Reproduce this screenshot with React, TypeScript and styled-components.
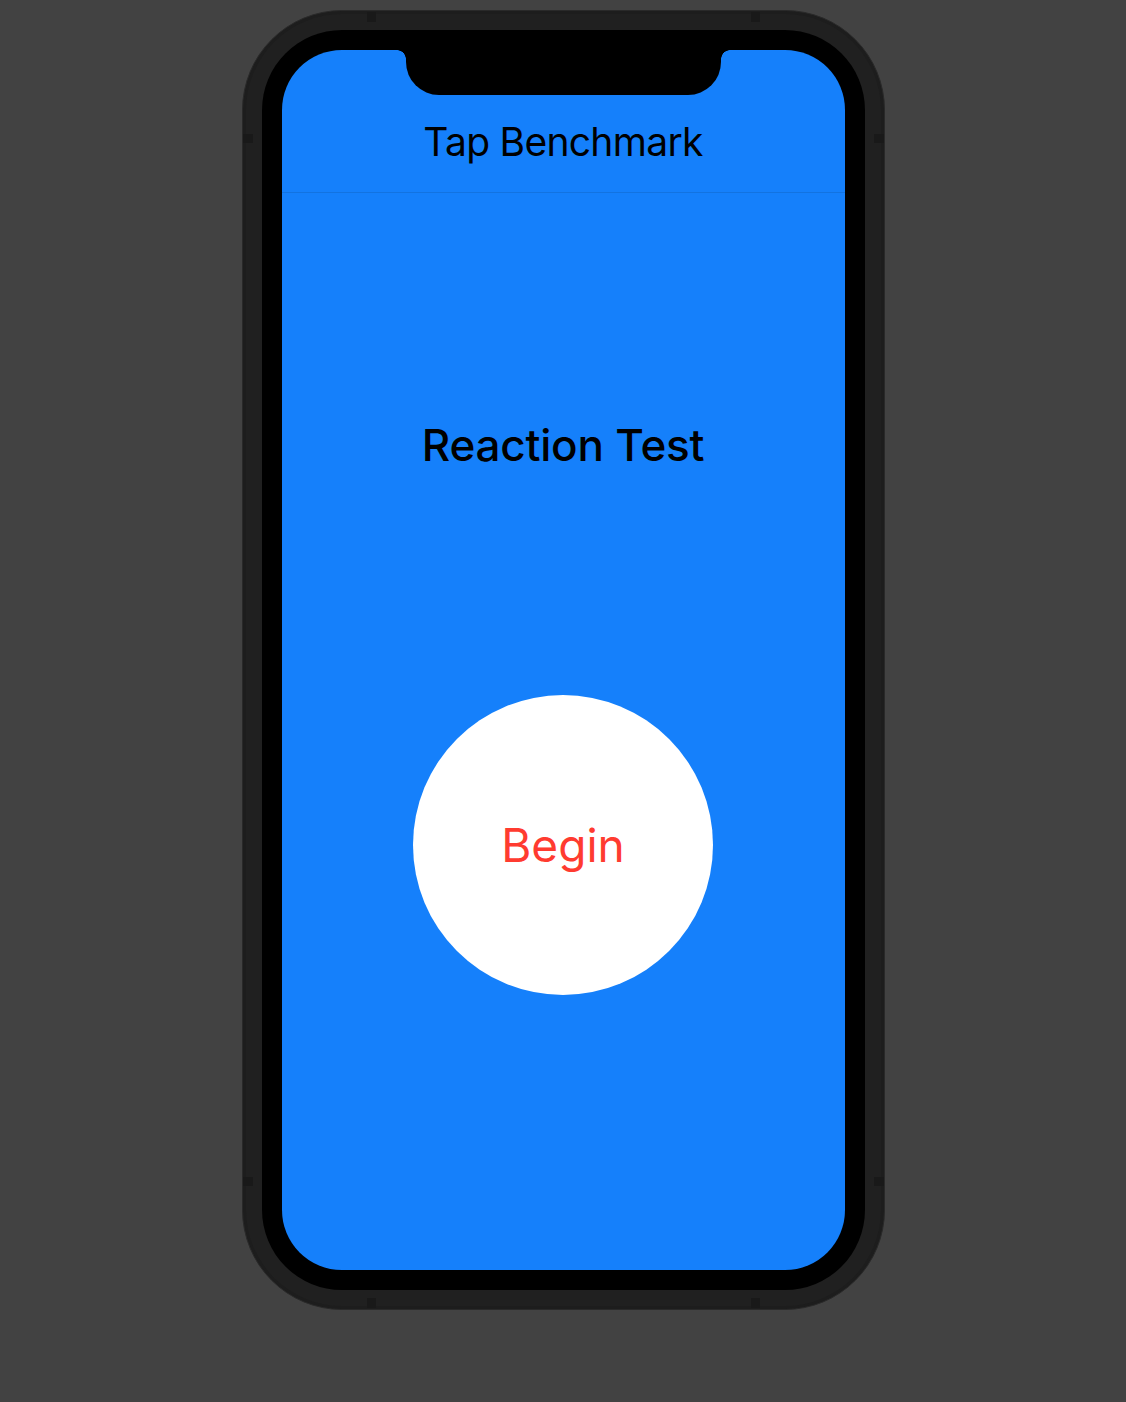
import styled, { createGlobalStyle } from 'styled-components'

const GlobalStyle = createGlobalStyle`
	html, body {
		margin: 0;
		padding: 0;
		background: #424242;
	}
	body {
		font-family: Inter, "Noto Sans", "Liberation Sans", sans-serif;
		-webkit-font-smoothing: antialiased;
	}
`

export default function App(): JSX.Element {
	return (
		<Page>
			<GlobalStyle />
			<Frame>
				{/* antenna lines on the metal band */}
				<Antenna $side="top" $offset={124} />
				<Antenna $side="top" $offset={124} $far />
				<Antenna $side="bottom" $offset={124} />
				<Antenna $side="bottom" $offset={124} $far />
				<Antenna $side="left" $offset={123} />
				<Antenna $side="left" $offset={123} $far />
				<Antenna $side="right" $offset={123} />
				<Antenna $side="right" $offset={123} $far />

				<Bezel>
					<Screen>
						<Notch />
						<Header>
							<HeaderTitle>Tap Benchmark</HeaderTitle>
						</Header>
						<Body>
							<Title>Reaction Test</Title>
							<TapButton type="button">Begin</TapButton>
						</Body>
					</Screen>
				</Bezel>
			</Frame>
		</Page>
	)
}

const Page = styled.div`
	min-height: 1402px;
	display: flex;
	justify-content: center;
	align-items: flex-start;
	padding-top: 10px;
	box-sizing: border-box;
`
const Frame = styled.div`
	position: relative;
	width: 643px;
	height: 1300px;
	box-sizing: border-box;
	padding: 19px;
	border-radius: 100px;
	background: #202020;
	border: 1.5px solid #292929;
	box-shadow: inset 0 0 0 3px #1d1d1d;
`
const Antenna = styled.span<{ $side: 'top' | 'bottom' | 'left' | 'right'; $offset: number; $far?: boolean }>`
	position: absolute;
	background: #191919;
	${({ $side, $offset, $far }) => {
		const along = $far ? 'right' : 'left'
		const alongV = $far ? 'bottom' : 'top'
		if ($side === 'top' || $side === 'bottom')
			return `${$side}: 1px; ${along}: ${$offset}px; width: 9px; height: 10px;`
		return `${$side}: 0px; ${alongV}: ${$offset}px; width: 10px; height: 9px;`
	}}
`
const Bezel = styled.div`
	height: 100%;
	box-sizing: border-box;
	padding: 20px;
	border-radius: 80px;
	background: #000;
`
const Screen = styled.div`
	position: relative;
	height: 100%;
	border-radius: 60px;
	overflow: hidden;
	background: #1580fb;
	display: flex;
	flex-direction: column;
`
const Notch = styled.div`
	position: absolute;
	top: 0;
	left: 50%;
	width: 315px;
	height: 45px;
	margin-left: -157.5px;
	background: #000;
	border-radius: 0 0 33px 33px;
	&::before, &::after {
		content: '';
		position: absolute;
		top: 0;
		width: 9px;
		height: 9px;
	}
	&::before {
		left: -9px;
		background: radial-gradient(circle at 0 100%, transparent 8.5px, #000 9px);
	}
	&::after {
		right: -9px;
		background: radial-gradient(circle at 100% 100%, transparent 8.5px, #000 9px);
	}
`
const Header = styled.header`
	height: 143px;
	box-sizing: border-box;
	padding-top: 72px;
	border-bottom: 1px solid rgba(0, 0, 0, 0.1);
	display: flex;
	justify-content: center;
	align-items: flex-start;
`
const HeaderTitle = styled.h1`
	margin: 0;
	font-size: 39px;
	line-height: 39px;
	font-weight: 400;
	color: #000;
	letter-spacing: -0.7px;
`
const Body = styled.main`
	flex: 1;
	display: flex;
	flex-direction: column;
	align-items: center;
`
const Title = styled.h2`
	margin: 230px 0 0;
	font-size: 44px;
	line-height: 44px;
	font-weight: 500;
	color: #000;
	letter-spacing: -0.2px;
`
const TapButton = styled.button`
	margin-top: 228px;
	width: 300px;
	height: 300px;
	border-radius: 50%;
	border: none;
	background: #fff;
	color: #ff3b30;
	font-family: inherit;
	font-size: 46px;
	font-weight: 400;
	letter-spacing: 0;
	padding: 0;
	cursor: pointer;
`
